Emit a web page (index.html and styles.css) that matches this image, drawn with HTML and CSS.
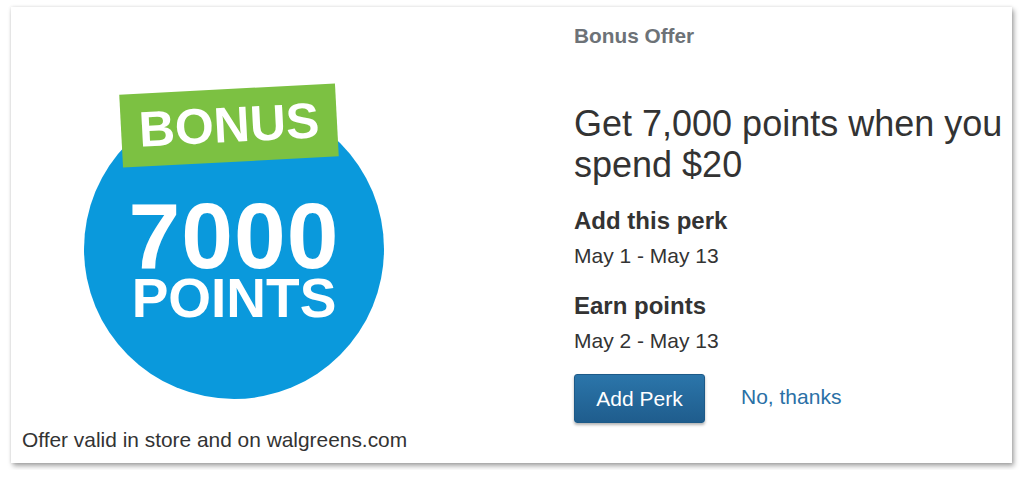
FILE: index.html
```html
<!DOCTYPE html>
<html lang="en">
<head>
<meta charset="utf-8">
<title>Bonus Offer</title>
<link rel="stylesheet" href="styles.css">
</head>
<body>
<div class="card">
  <div class="media">
    <div class="badge">
      <div class="circle">
        <span class="big">7000</span>
        <span class="unit">POINTS</span>
      </div>
      <div class="label">BONUS</div>
    </div>
    <p class="note">Offer valid in store and on walgreens.com</p>
  </div>
  <div class="info">
    <div class="eyebrow">Bonus Offer</div>
    <h1 class="headline">Get 7,000 points when you spend $20</h1>
    <h2 class="sub">Add this perk</h2>
    <p class="dates">May 1 - May 13</p>
    <h2 class="sub sub-2">Earn points</h2>
    <p class="dates">May 2 - May 13</p>
    <div class="actions">
      <button class="btn">Add Perk</button>
      <a class="link" href="#">No, thanks</a>
    </div>
  </div>
</div>
</body>
</html>
```
FILE: styles.css
```css
html, body {
  margin: 0;
  padding: 0;
  background: #ffffff;
}
body {
  padding: 7px 11px;
  font-family: "Liberation Sans", Arial, Helvetica, sans-serif;
  color: #333333;
}
.card {
  width: 1001px;
  display: grid;
  grid-template-columns: 563px 1fr;
  background: #ffffff;
  box-shadow: 2px 3px 5px rgba(0, 0, 0, 0.35), 0 0 3px rgba(0, 0, 0, 0.12);
}
.media {
  display: flex;
  flex-direction: column;
  padding: 0 0 11px 11px;
}
.badge {
  position: relative;
  width: 300px;
  height: 300px;
  margin: 92px 0 0 62px;
}
.circle {
  width: 300px;
  height: 300px;
  border-radius: 50%;
  background: #0a99dc;
  color: #ffffff;
  display: flex;
  flex-direction: column;
  align-items: center;
  padding-top: 102px;
  box-sizing: border-box;
  font-weight: bold;
}
.big {
  font-size: 93px;
  line-height: 70px;
  letter-spacing: 1px;
}
.unit {
  font-size: 55px;
  line-height: 40px;
  margin-top: 7px;
}
.label {
  position: absolute;
  left: 37px;
  top: -10px;
  width: 216px;
  height: 73px;
  background: #7cc142;
  color: #ffffff;
  font-weight: bold;
  font-size: 50px;
  line-height: 73px;
  text-align: center;
  transform: rotate(-3deg);
}
.note {
  margin: 29px 0 0 0;
  font-size: 20.9px;
  line-height: 24px;
  color: #333333;
}
.info {
  padding: 17px 0 0 0;
}
.eyebrow {
  font-size: 20.8px;
  line-height: 23px;
  font-weight: bold;
  color: #6d7277;
}
.headline {
  margin: 56px 0 0 0;
  font-size: 36px;
  line-height: 41px;
  font-weight: normal;
  color: #333333;
}
.sub {
  margin: 22px 0 0 0;
  font-size: 24px;
  line-height: 28px;
  font-weight: bold;
  color: #333333;
}
.sub-2 {
  margin-top: 24px;
}
.dates {
  margin: 9px 0 0 0;
  font-size: 21px;
  line-height: 24px;
}
.actions {
  display: flex;
  align-items: center;
  gap: 36px;
  margin-top: 21px;
}
.btn {
  width: 131px;
  height: 49px;
  border: 1px solid #1d5a88;
  border-radius: 3px;
  background: linear-gradient(#2b75aa, #1f5d8d);
  color: #ffffff;
  font-family: inherit;
  font-size: 21px;
  padding: 0;
  box-shadow: 0 2px 3px rgba(0, 0, 0, 0.3);
}
.link {
  font-size: 21px;
  color: #2a70a6;
  text-decoration: none;
  margin-bottom: 4px;
}
```
